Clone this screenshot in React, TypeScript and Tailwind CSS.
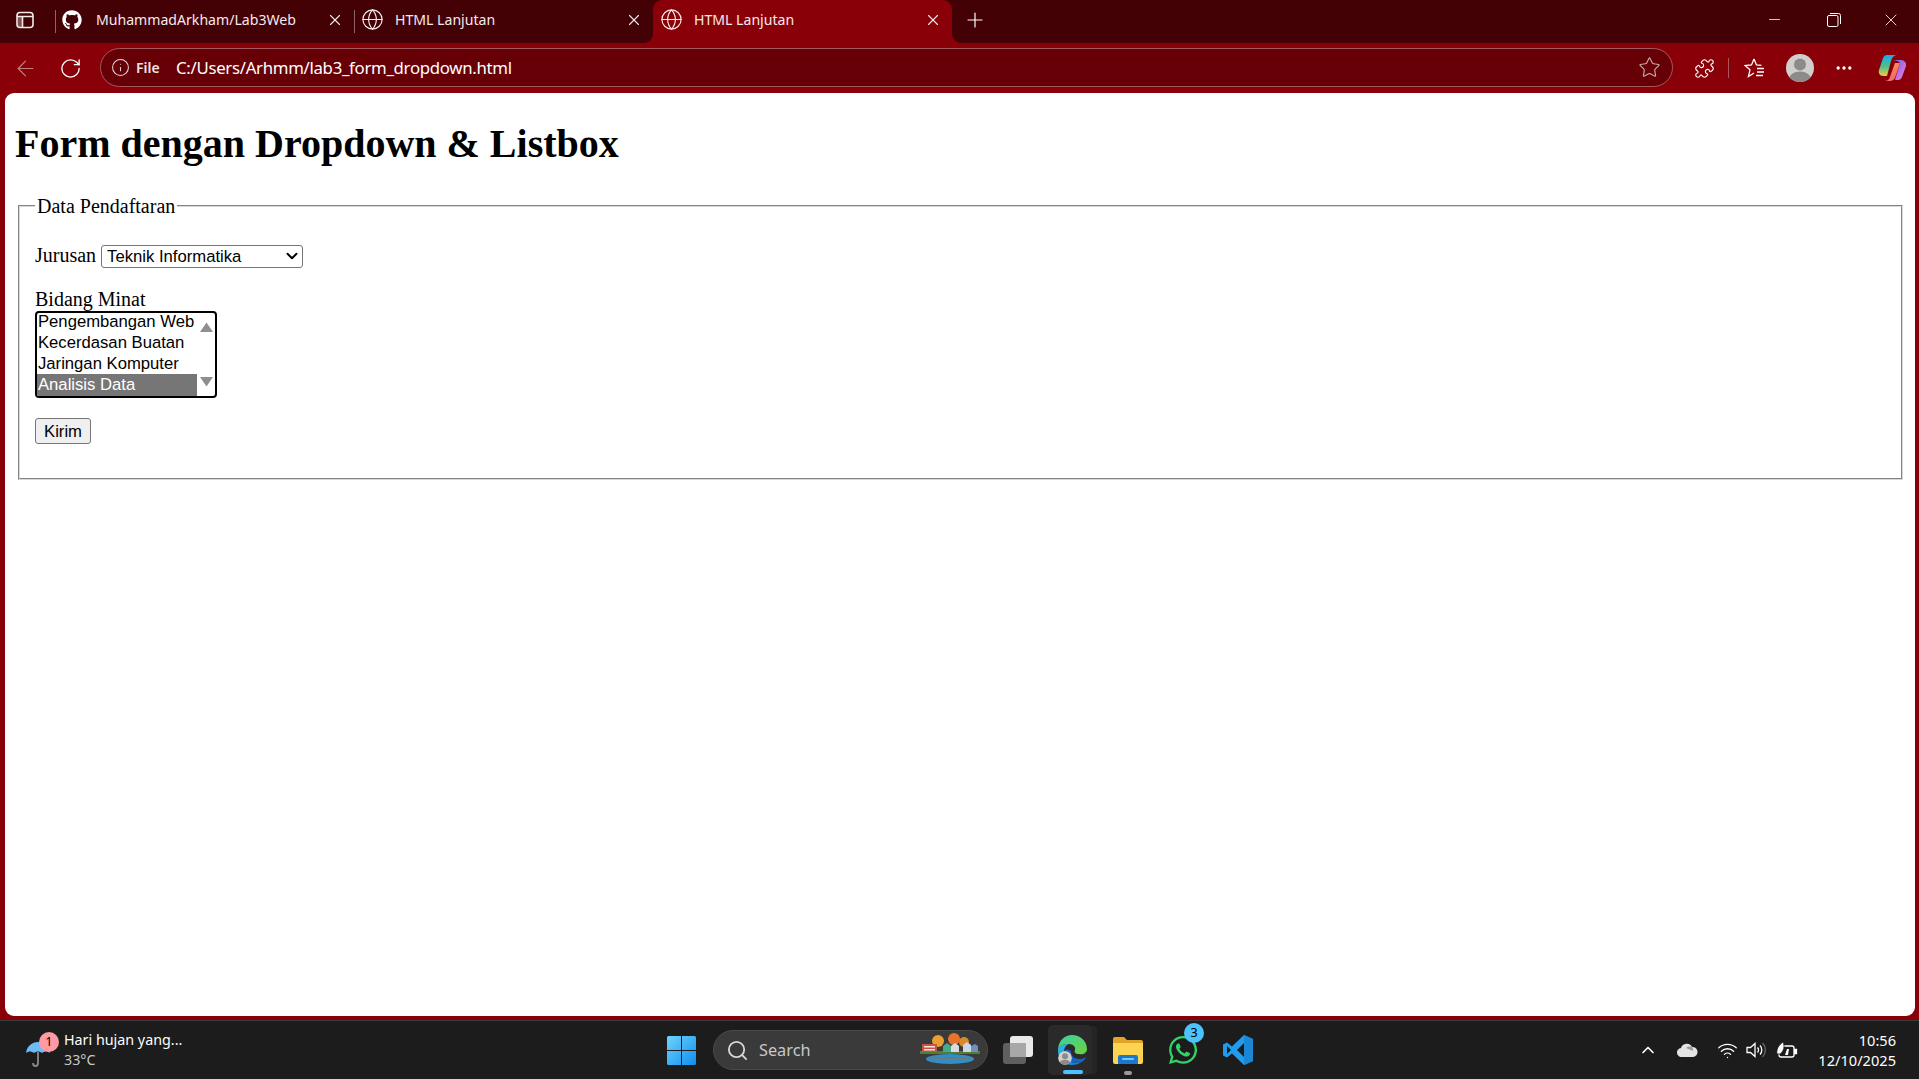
import React from "react";
import { FaGithub, FaWhatsapp } from "react-icons/fa";
import { Globe, X, Plus, Minus, ArrowLeft, RotateCw, Info, Star, Puzzle, MoreHorizontal, Search, ChevronUp, Wifi, ChevronDown } from "lucide-react";

const sans = "font-['Noto_Sans','Open_Sans',sans-serif]";

function Tab({ icon, title, active, sep }: { icon: React.ReactNode; title: string; active?: boolean; sep?: boolean }) {
  return (
    <div className={`relative flex h-[43px] w-[299px] shrink-0 items-center pb-[4px] text-[14.1px] text-[#f6eaea] ${active ? "rounded-t-[9px] bg-[#8a0008]" : ""}`}>
      {sep && <div className="absolute left-0 top-[10px] h-[23px] w-px bg-[#8d6567]" />}
      {active && (
        <>
          <div className="absolute -left-[9px] bottom-0 h-[9px] w-[9px] bg-[#8a0008]"><div className="h-full w-full rounded-br-[9px] bg-[#430005]" /></div>
          <div className="absolute -right-[9px] bottom-0 h-[9px] w-[9px] bg-[#8a0008]"><div className="h-full w-full rounded-bl-[9px] bg-[#430005]" /></div>
        </>
      )}
      <div className="ml-[7px] flex w-[34px] shrink-0 items-center">{icon}</div>
      <span className="w-[230px] shrink-0">{title}</span>
      <X size={18} strokeWidth={1.5} className="shrink-0" />
    </div>
  );
}

function Edge() {
  return (
    <svg width="30" height="30" viewBox="0 0 30 30">
      <defs>
        <linearGradient id="e1" x1="0" y1="0" x2="1" y2="1"><stop offset="0" stopColor="#2fc1de" /><stop offset="1" stopColor="#1b6fd1" /></linearGradient>
        <linearGradient id="e2" x1="0" y1="0" x2="1" y2="1"><stop offset="0" stopColor="#3bd0a4" /><stop offset="1" stopColor="#6bd23f" /></linearGradient>
      </defs>
      <path d="M1 14C2 5 8 0 15 0c8 0 15 6 15 14 0 4-4 6-8 5-4 0-5-2-4-4 1-3-2-6-6-6C7 9 3 10 1 14z" fill="url(#e2)" />
      <path d="M1 14c2-4 6-5 11-5-3 1-5 4-5 8 0 6 6 11 13 11 2 0 3 0 5-1-3 2-7 3-10 3C7 30 0 23 1 14z" fill="url(#e1)" />
      <path d="M7 17c0 6 6 11 13 11 2 0 3 0 5-1 2-1 3-3 4-5-3 2-7 3-11 1-3-1-4-4-4-7-3-2-6-2-7 1z" fill="#1565c0" />
    </svg>
  );
}

function Copilot() {
  return (
    <svg width="28" height="28" viewBox="0 0 28 28">
      <defs>
        <linearGradient id="c1" x1="0" y1="0" x2="0" y2="1"><stop offset="0" stopColor="#1ea7ea" /><stop offset="0.55" stopColor="#4bc28a" /><stop offset="1" stopColor="#f6c744" /></linearGradient>
        <linearGradient id="c2" x1="0" y1="0" x2="1" y2="1"><stop offset="0" stopColor="#4a7df0" /><stop offset="0.5" stopColor="#b36be8" /><stop offset="1" stopColor="#f08ac0" /></linearGradient>
        <linearGradient id="c3" x1="0" y1="0" x2="1" y2="1"><stop offset="0" stopColor="#fbb04a" /><stop offset="1" stopColor="#f0506e" /></linearGradient>
      </defs>
      <path d="M9 1h9c-3 1-4 3-5 6l-4 15H5c-3 0-5-3-4-6L5 4c1-2 2-3 4-3z" fill="url(#c1)" />
      <path d="M14 6h9c3 0 6 3 5 6l-4 11c-1 2-2 3-4 3h-3l5-17c-1-2-5-3-8-3z" fill="url(#c2)" />
      <path d="M17 9l5 0-5 15c-1 2-3 3-5 3H6c3 0 5-1 6-4z" fill="url(#c3)" />
    </svg>
  );
}

function Avatar({ size }: { size: number }) {
  return (
    <svg width={size} height={size} viewBox="0 0 28 28">
      <defs><clipPath id={`av${size}`}><circle cx="14" cy="14" r="14" /></clipPath></defs>
      <circle cx="14" cy="14" r="14" fill="#d1cfcc" />
      <g clipPath={`url(#av${size})`}>
        <circle cx="14" cy="10.5" r="6" fill="#8d8b89" />
        <ellipse cx="14" cy="25" rx="11" ry="7.5" fill="#8d8b89" />
      </g>
    </svg>
  );
}

function Scene() {
  return (
    <svg width="66" height="34" viewBox="0 0 64 34">
      <ellipse cx="32" cy="26" rx="24" ry="5" fill="#2f8ec6" />
      <rect x="2" y="18" width="60" height="3" fill="#4e7f2e" />
      <circle cx="20" cy="8" r="6" fill="#e9a030" />
      <circle cx="36" cy="6" r="6" fill="#e8742a" />
      <circle cx="46" cy="9" r="5" fill="#d98a26" />
      <rect x="4" y="11" width="15" height="8" fill="#c8524a" />
      <rect x="6" y="13" width="11" height="1.5" fill="#f0e8d8" />
      <rect x="6" y="16" width="11" height="1.5" fill="#f0e8d8" />
      <path d="M25 19v-6l4-3 4 3v6z" fill="#46a88c" />
      <path d="M33 19v-6l4-3 4 3v6z" fill="#d8dce0" />
      <path d="M45 19v-7l4-3 4 3v7z" fill="#c9d7ea" />
      <path d="M53 19v-6l4-2 3 2v6z" fill="#6f8fc0" />
      <rect x="12" y="24" width="40" height="2" fill="#6a7a80" />
    </svg>
  );
}

export default function App() {
  return (
    <div className={`flex h-[1079px] w-[1919px] flex-col overflow-hidden bg-[#8a0008] ${sans}`}>
      {/* tab strip */}
      <div className="flex h-[43px] shrink-0 items-center bg-[#430005] text-white">
        <div className="flex w-[55px] shrink-0 justify-center pb-[4px] pr-[6px]">
          <svg width="18" height="18" viewBox="0 0 18 18" fill="none" stroke="#f4eaea" strokeWidth="1.6"><rect x="1" y="1.5" width="16" height="15" rx="3" /><path d="M1 5.5h16M6.5 5.5v11" /><rect x="1.5" y="5.5" width="5" height="10.5" fill="#f4eaea" fillOpacity="0.35" stroke="none" /></svg>
        </div>
        <Tab sep icon={<FaGithub size={20} className="text-white" />} title="MuhammadArkham/Lab3Web" />
        <Tab sep icon={<Globe size={23} strokeWidth={1.2} />} title="HTML Lanjutan" />
        <Tab active icon={<Globe size={23} strokeWidth={1.2} />} title="HTML Lanjutan" />
        <div className="ml-[11px] flex w-[24px] justify-center pb-[4px]"><Plus size={24} strokeWidth={1.2} /></div>
        <div className="flex-1" />
        <div className="flex h-full items-center pb-[4px]">
          <div className="flex w-[57px] justify-center"><Minus size={17} strokeWidth={1.1} /></div>
          <div className="flex w-[58px] justify-center pl-[3px]">
            <svg width="14" height="14" viewBox="0 0 14 14" fill="none" stroke="#fff" strokeWidth="1"><rect x="0.5" y="2.5" width="10.5" height="11" rx="1.5" /><path d="M3 .5h8.5a2 2 0 0 1 2 2V11" /></svg>
          </div>
          <div className="flex w-[58px] justify-center pl-[1px]"><X size={20} strokeWidth={1} /></div>
        </div>
      </div>

      {/* toolbar */}
      <div className="flex h-[50px] shrink-0 items-center text-white">
        <div className="flex w-[50px] justify-center"><ArrowLeft size={25} strokeWidth={1.1} className="text-[#c47f82]" /></div>
        <div className="flex w-[40px] justify-center"><RotateCw size={23} strokeWidth={1.4} /></div>
        <div className="ml-[10px] mt-[-1px] flex h-[39px] w-[1573px] items-center rounded-full border border-[#a35a5e] bg-[#670006]">
          <Info size={19} strokeWidth={1.3} className="ml-[10px] text-[#e8d6d6]" />
          <span className="ml-[6px] w-[40px] text-[14px] font-semibold text-[#efe2e2]">File</span>
          <span className="text-[16.8px] tracking-[-0.3px] text-white">C:/Users/Arhmm/lab3_form_dropdown.html</span>
          <div className="flex-1" />
          <Star size={23} strokeWidth={1.2} className="mr-[11px] text-[#c6a9aa]" />
        </div>
        <div className="ml-[19px] flex w-[24px] justify-center"><Puzzle size={21} strokeWidth={1.3} /></div>
        <div className="ml-[12px] h-[20px] w-px bg-[#a8585b]" />
        <svg className="ml-[15px]" width="22" height="20" viewBox="0 0 22 20" fill="none" stroke="#fff" strokeWidth="1.3"><path d="M10 1l2.500 6 5 .4M13 10.500h7M13 14h7M12 17.500h7M10 1L7.500 7 1 7.600l5 4.200-1.600 6.700L10 15" /></svg>
        <div className="ml-[20px] flex"><Avatar size={28} /></div>
        <div className="ml-[20px] flex w-[20px] justify-center"><MoreHorizontal size={20} strokeWidth={2} /></div>
        <div className="ml-[24px] flex"><Copilot /></div>
      </div>

      {/* page */}
      <main className="ml-[5px] mr-[4px] h-[923px] shrink-0 overflow-hidden rounded-[9px] bg-white px-[10px] text-black font-['Liberation_Serif',serif]">
        <h1 className="mb-[26px] mt-[28px] text-[40px] font-bold leading-[46px]">Form dengan Dropdown &amp; Listbox</h1>
        <fieldset className="ml-[3px] mr-[2px] h-[287px] border-2 border-[#d8d8d8] px-[15px] [border-style:groove]">
          <legend className="px-[2px] pt-[2px] text-[20px] leading-[23px]">Data Pendaftaran</legend>
          <div className="mt-[25px] flex h-[25px] items-center text-[20px] leading-[23px]">
            <span>Jurusan</span>
            <div className="relative ml-[5px] h-[23px] w-[202px] font-['Liberation_Sans',sans-serif]">
              <select defaultValue="ti" className="h-full w-full appearance-none rounded-[3px] border border-[#767676] bg-white pl-[5px] text-[16.67px] leading-[19px]">
                <option value="ti">Teknik Informatika</option>
              </select>
              <ChevronDown size={18} strokeWidth={2.6} className="pointer-events-none absolute right-[2px] top-[3px] text-black" />
            </div>
          </div>
          <div className="mt-[20px] text-[20px] leading-[23px]">Bidang Minat</div>
          <div className="flex h-[87px] w-[182px] overflow-hidden rounded-[4px] border-2 border-black text-[16.67px] leading-[21px] font-['Liberation_Sans',sans-serif]">
            <div className="-mt-[2px] w-[160px] shrink-0">
              <div className="pl-[1px]">Pengembangan Web</div>
              <div className="pl-[1px]">Kecerdasan Buatan</div>
              <div className="pl-[1px]">Jaringan Komputer</div>
              <div className="bg-[#767676] pb-[1px] pl-[1px] text-white">Analisis Data</div>
            </div>
            <div className="flex flex-1 flex-col items-center justify-between py-[9px]">
              <svg width="13" height="10" viewBox="0 0 13 10"><path d="M6.500 0.500L13 10H0z" fill="#8f8f8f" /></svg>
              <svg width="13" height="10" viewBox="0 0 13 10"><path d="M6.500 9.500L13 0H0z" fill="#8f8f8f" /></svg>
            </div>
          </div>
          <button className="mt-[20px] flex h-[26px] w-[56px] items-center justify-center rounded-[3px] border border-[#767676] bg-[#efefef] text-[16.67px] font-['Liberation_Sans',sans-serif]">Kirim</button>
        </fieldset>
      </main>

      {/* taskbar */}
      <div className="mt-[4px] flex h-[59px] shrink-0 items-center border-t border-[#3b3b3b] bg-[#1c1c1c] text-white">
        <div className="flex w-[667px] shrink-0 items-center">
          <div className="relative ml-[26px] h-[30px] w-[38px]">
            <svg width="24" height="28" viewBox="0 0 24 28" className="absolute left-0 top-[6px]">
              <path d="M0 12C1 5 6 1 12 1s11 4 12 11c-3-2-5-2-8 0-3-2-5-2-8 0-3-2-5-2-8 0z" fill="#6cbcf8" />
              <path d="M12 11v11c0 2-1 3-2.500 3S7 24 7 22" fill="none" stroke="#8a8a8a" strokeWidth="1.8" />
            </svg>
            <div className="absolute -top-[3px] left-[13px] flex h-[20px] w-[20px] items-center justify-center rounded-full bg-[#ff99a4] text-[12px] text-black">1</div>
          </div>
          <div className="flex flex-col text-[14.3px] leading-[20px]">
            <span>Hari hujan yang...</span>
            <span className="text-[#c8c8c8]">33°C</span>
          </div>
        </div>
        <svg width="29" height="29" viewBox="0 0 29 29" className="shrink-0">
          <defs><linearGradient id="w" x1="0" y1="0" x2="1" y2="1"><stop offset="0" stopColor="#6fd3fb" /><stop offset="1" stopColor="#0f8fee" /></linearGradient></defs>
          <path d="M1.500 0H14v14H0V1.500A1.500 1.500 0 0 1 1.500 0zM15 0h12.500A1.500 1.500 0 0 1 29 1.500V14H15zM0 15h14v14H1.500A1.500 1.500 0 0 1 0 27.500zM15 15h14v12.500a1.500 1.500 0 0 1-1.500 1.500H15z" fill="url(#w)" />
        </svg>
        <div className="ml-[17px] flex h-[40px] w-[275px] shrink-0 items-center rounded-full border border-[#4a4a4a] bg-[#3a3a3a]">
          <Search size={23} strokeWidth={1.9} className="ml-[12px] text-[#d8d8d8]" />
          <span className="ml-[10px] text-[16.3px] text-[#c8c8c8]">Search</span>
          <div className="flex-1" />
          <div className="mr-[4px] flex"><Scene /></div>
        </div>
        <div className="ml-[15px] w-[30px] shrink-0">
          <svg width="30" height="30" viewBox="0 0 30 30">
            <rect x="0" y="8" width="23" height="21" rx="3" fill="#5f5f5f" />
            <rect x="7" y="1" width="23" height="21" rx="3" fill="#e9e9e9" />
            <rect x="7" y="8" width="16" height="14" fill="#a8a8a8" />
          </svg>
        </div>
        <div className="relative ml-[15px] flex h-[50px] w-[44px] shrink-0 items-center justify-center rounded-[5px] bg-[#2a2a2a] pl-[4px] shadow-[6px_0_0_-1px_#252525]">
          <Edge />
          <div className="absolute left-[10px] top-[26px] flex h-[14px] w-[14px] overflow-hidden rounded-full"><Avatar size={14} /></div>
          <div className="absolute bottom-[1px] left-[15px] h-[4px] w-[20px] rounded-full bg-[#4cc2ff]" />
        </div>
        <div className="relative ml-[21px] w-[30px] shrink-0">
          <svg width="30" height="27" viewBox="0 0 30 27" className="mt-[1px]">
            <path d="M0 2a2 2 0 0 1 2-2h9l3 3h14a2 2 0 0 1 2 2v3H0z" fill="#e0a526" />
            <path d="M0 6h30v19a2 2 0 0 1-2 2H2a2 2 0 0 1-2-2z" fill="#fdd451" />
            <path d="M5 27v-7a2 2 0 0 1 2-2h16a2 2 0 0 1 2 2v7z" fill="#1a78d0" />
            <rect x="9" y="21" width="12" height="2" rx="1" fill="#7cc6f5" />
          </svg>
          <div className="absolute bottom-[-11px] left-[11px] h-[4px] w-[8px] rounded-full bg-[#9a9a9a]" />
        </div>
        <div className="relative ml-[25px] w-[30px] shrink-0">
          <FaWhatsapp size={32} className="text-[#2fd366] -ml-[1px]" />
          <div className="absolute -top-[11px] left-[16px] flex h-[20px] w-[20px] items-center justify-center rounded-full bg-[#4cc2ff] text-[12.5px] text-black">3</div>
        </div>
        <div className="ml-[25px] w-[30px] shrink-0">
          <svg width="30" height="30" viewBox="0 0 30 30">
            <path d="M21 0l9 4v22l-9 4-12-11.500-5 4-4-2V9.500l4-2 5 4z" fill="#1f9cf0" />
            <path d="M21 0l9 4v22l-9 4z" fill="#1b85d6" />
            <path d="M21 8l-7 7 7 7z" fill="#1c1c1c" />
            <path d="M4 11v8l4-4z" fill="#1c1c1c" />
          </svg>
        </div>
        <div className="flex-1" />
        <div className="flex w-[20px] justify-center"><ChevronUp size={22} strokeWidth={2} /></div>
        <svg className="ml-[19px]" width="21" height="14" viewBox="0 0 21 14">
          <path d="M5 14a4.500 4.500 0 0 1-1-9 6 6 0 0 1 11-1 5 5 0 0 1 1 10z" fill="#e4e4e4" />
          <path d="M9 5a6 6 0 0 1 6-1 5 5 0 0 1 1 4z" fill="#9c9c9c" />
        </svg>
        <div className="ml-[19px] flex"><Wifi size={21} strokeWidth={1.5} /></div>
        <svg className="ml-[8px]" width="20" height="18" viewBox="0 0 20 18" fill="none" stroke="#fff" strokeWidth="1.3"><path d="M1 6.500h3.500L9 2.500v13l-4.500-4H1z" /><path d="M11.500 6.500a3.500 3.500 0 0 1 0 5M14 4.500a6.500 6.500 0 0 1 0 9" /><path d="M16.500 2a10 10 0 0 1 0 14" stroke="#666" /></svg>
        <svg className="ml-[10px]" width="22" height="19" viewBox="0 0 22 19" fill="none" stroke="#fff" strokeWidth="1.3"><rect x="3" y="5" width="15" height="11" rx="2" /><path d="M18 8.500h2.500v4H18" fill="#fff" /><path d="M1 13c-1-5 2-9 6-12 2 4 1 9-3 12z" fill="#fff" stroke="#1c1c1c" strokeWidth="0.8" /><path d="M9 14l2-6h2l-1 6z" fill="#fff" stroke="none" /></svg>
        <div className="ml-[20px] mr-[23px] flex flex-col items-end text-[14.6px] leading-[20px]">
          <span>10:56</span>
          <span>12/10/2025</span>
        </div>
      </div>
    </div>
  );
}
